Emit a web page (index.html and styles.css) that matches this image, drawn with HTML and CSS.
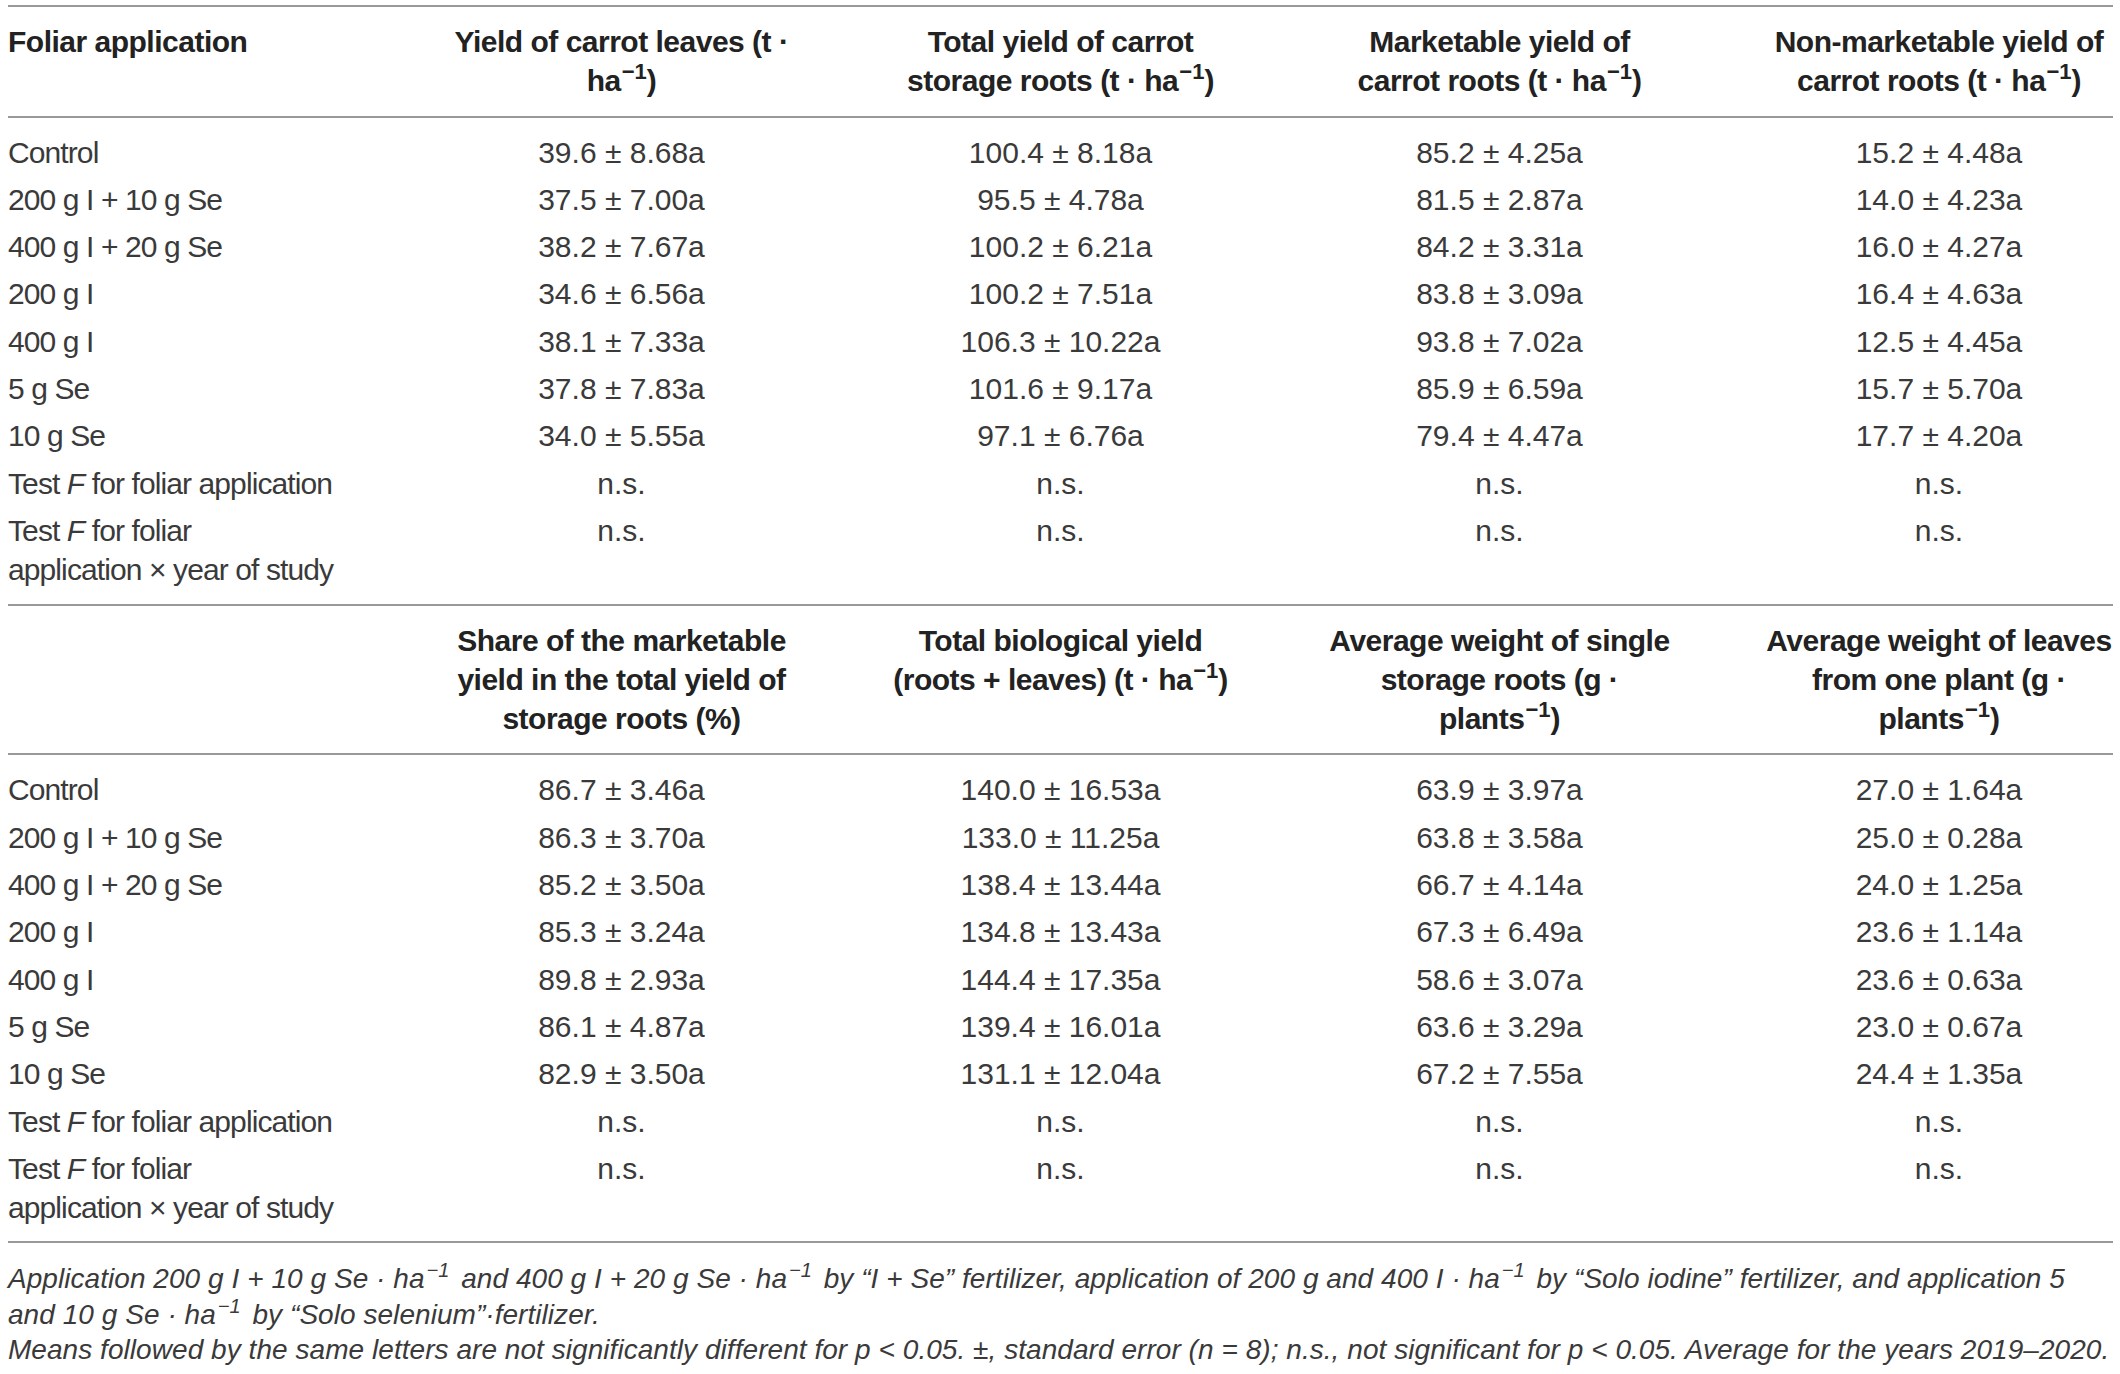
FILE: index.html
```html
<!DOCTYPE html>
<html lang="en">
<head>
    <meta charset="UTF-8">
    <title>Carrot yield table</title>
    <link rel="stylesheet" href="styles.css">
</head>
<body>
    <table class="yield-table">
        <colgroup>
            <col class="col-name">
            <col class="col-num">
            <col class="col-num">
            <col class="col-num">
            <col class="col-last">
        </colgroup>

        <!-- first block -->
        <tbody class="head">
            <tr>
                <th class="name">Foliar application</th>
                <th>Yield of carrot leaves (t ·<br>ha<sup>−1</sup>)</th>
                <th>Total yield of carrot<br>storage roots (t · ha<sup>−1</sup>)</th>
                <th>Marketable yield of<br>carrot roots (t · ha<sup>−1</sup>)</th>
                <th class="last">Non-marketable yield of<br>carrot roots (t · ha<sup>−1</sup>)</th>
            </tr>
        </tbody>
        <tbody class="data">
            <tr><td class="name">Control</td><td>39.6 ± 8.68a</td><td>100.4 ± 8.18a</td><td>85.2 ± 4.25a</td><td class="last">15.2 ± 4.48a</td></tr>
            <tr><td class="name">200 g I + 10 g Se</td><td>37.5 ± 7.00a</td><td>95.5 ± 4.78a</td><td>81.5 ± 2.87a</td><td class="last">14.0 ± 4.23a</td></tr>
            <tr><td class="name">400 g I + 20 g Se</td><td>38.2 ± 7.67a</td><td>100.2 ± 6.21a</td><td>84.2 ± 3.31a</td><td class="last">16.0 ± 4.27a</td></tr>
            <tr><td class="name">200 g I</td><td>34.6 ± 6.56a</td><td>100.2 ± 7.51a</td><td>83.8 ± 3.09a</td><td class="last">16.4 ± 4.63a</td></tr>
            <tr><td class="name">400 g I</td><td>38.1 ± 7.33a</td><td>106.3 ± 10.22a</td><td>93.8 ± 7.02a</td><td class="last">12.5 ± 4.45a</td></tr>
            <tr><td class="name">5 g Se</td><td>37.8 ± 7.83a</td><td>101.6 ± 9.17a</td><td>85.9 ± 6.59a</td><td class="last">15.7 ± 5.70a</td></tr>
            <tr><td class="name">10 g Se</td><td>34.0 ± 5.55a</td><td>97.1 ± 6.76a</td><td>79.4 ± 4.47a</td><td class="last">17.7 ± 4.20a</td></tr>
            <tr><td class="name">Test <i>F</i> for foliar application</td><td>n.s.</td><td>n.s.</td><td>n.s.</td><td class="last">n.s.</td></tr>
            <tr><td class="name">Test <i>F</i> for foliar<br>application × year of study</td><td>n.s.</td><td>n.s.</td><td>n.s.</td><td class="last">n.s.</td></tr>
        </tbody>

        <!-- second block -->
        <tbody class="head">
            <tr>
                <th class="name"></th>
                <th>Share of the marketable<br>yield in the total yield of<br>storage roots (%)</th>
                <th>Total biological yield<br>(roots + leaves) (t · ha<sup>−1</sup>)</th>
                <th>Average weight of single<br>storage roots (g ·<br>plants<sup>−1</sup>)</th>
                <th class="last">Average weight of leaves<br>from one plant (g ·<br>plants<sup>−1</sup>)</th>
            </tr>
        </tbody>
        <tbody class="data">
            <tr><td class="name">Control</td><td>86.7 ± 3.46a</td><td>140.0 ± 16.53a</td><td>63.9 ± 3.97a</td><td class="last">27.0 ± 1.64a</td></tr>
            <tr><td class="name">200 g I + 10 g Se</td><td>86.3 ± 3.70a</td><td>133.0 ± 11.25a</td><td>63.8 ± 3.58a</td><td class="last">25.0 ± 0.28a</td></tr>
            <tr><td class="name">400 g I + 20 g Se</td><td>85.2 ± 3.50a</td><td>138.4 ± 13.44a</td><td>66.7 ± 4.14a</td><td class="last">24.0 ± 1.25a</td></tr>
            <tr><td class="name">200 g I</td><td>85.3 ± 3.24a</td><td>134.8 ± 13.43a</td><td>67.3 ± 6.49a</td><td class="last">23.6 ± 1.14a</td></tr>
            <tr><td class="name">400 g I</td><td>89.8 ± 2.93a</td><td>144.4 ± 17.35a</td><td>58.6 ± 3.07a</td><td class="last">23.6 ± 0.63a</td></tr>
            <tr><td class="name">5 g Se</td><td>86.1 ± 4.87a</td><td>139.4 ± 16.01a</td><td>63.6 ± 3.29a</td><td class="last">23.0 ± 0.67a</td></tr>
            <tr><td class="name">10 g Se</td><td>82.9 ± 3.50a</td><td>131.1 ± 12.04a</td><td>67.2 ± 7.55a</td><td class="last">24.4 ± 1.35a</td></tr>
            <tr><td class="name">Test <i>F</i> for foliar application</td><td>n.s.</td><td>n.s.</td><td>n.s.</td><td class="last">n.s.</td></tr>
            <tr><td class="name">Test <i>F</i> for foliar<br>application × year of study</td><td>n.s.</td><td>n.s.</td><td>n.s.</td><td class="last">n.s.</td></tr>
        </tbody>
    </table>

    <div class="notes">
        <p>Application 200 g I + 10 g Se · ha<sup>−1</sup> and 400 g I + 20 g Se · ha<sup>−1</sup> by “I + Se” fertilizer, application of 200 g and 400 I · ha<sup>−1</sup> by “Solo iodine” fertilizer, and application 5<br>and 10 g Se · ha<sup>−1</sup> by “Solo selenium”·fertilizer.</p>
        <p>Means followed by the same letters are not significantly different for p &lt; 0.05. ±, standard error (n = 8); n.s., not significant for p &lt; 0.05. Average for the years 2019–2020.</p>
    </div>
</body>
</html>
```

FILE: styles.css
```css
body {
    margin: 0;
    padding: 5px 7px 0 8px;
    background: #fff;
    color: #333;
    font-family: "Liberation Sans", Arial, sans-serif;
}

.yield-table {
    width: 2105px;
    table-layout: fixed;
    border-collapse: collapse;
    border-top: 2px solid #999;
}

.col-name { width: 394px; }
.col-num { width: 439px; }
.col-last { width: 394px; }

.yield-table th,
.yield-table td {
    padding: 4px 0;
    text-align: center;
    vertical-align: top;
    font-size: 30px;
    line-height: 39.3px;
    white-space: nowrap;
}

.yield-table th {
    color: #222;
    font-weight: bold;
    letter-spacing: -0.5px;
    padding: 15px 0 15px;
}

.yield-table .name {
    text-align: left;
    letter-spacing: -0.9px;
}

.yield-table th.name {
    letter-spacing: -0.5px;
}

.yield-table .last {
    padding-left: 46px;
}

.head,
.data {
    border-bottom: 2px solid #999;
}

.data tr:first-child td {
    padding-top: 15px;
}

.data tr:last-child td {
    padding-bottom: 14px;
}

.data td {
    font-weight: normal;
    color: #3a3a3a;
}

sup {
    font-size: 22px;
    line-height: 0;
    vertical-align: 12px;
    letter-spacing: 0;
    margin-left: 1px;
}

.notes {
    padding-top: 18px;
}

.notes p {
    margin: 0;
    font-size: 28px;
    line-height: 35.5px;
    font-style: italic;
    letter-spacing: 0.05px;
    white-space: nowrap;
    color: #3a3a3a;
}

.notes sup {
    font-size: 20px;
    vertical-align: 11px;
    margin: 0 4px 0 2px;
}
```
